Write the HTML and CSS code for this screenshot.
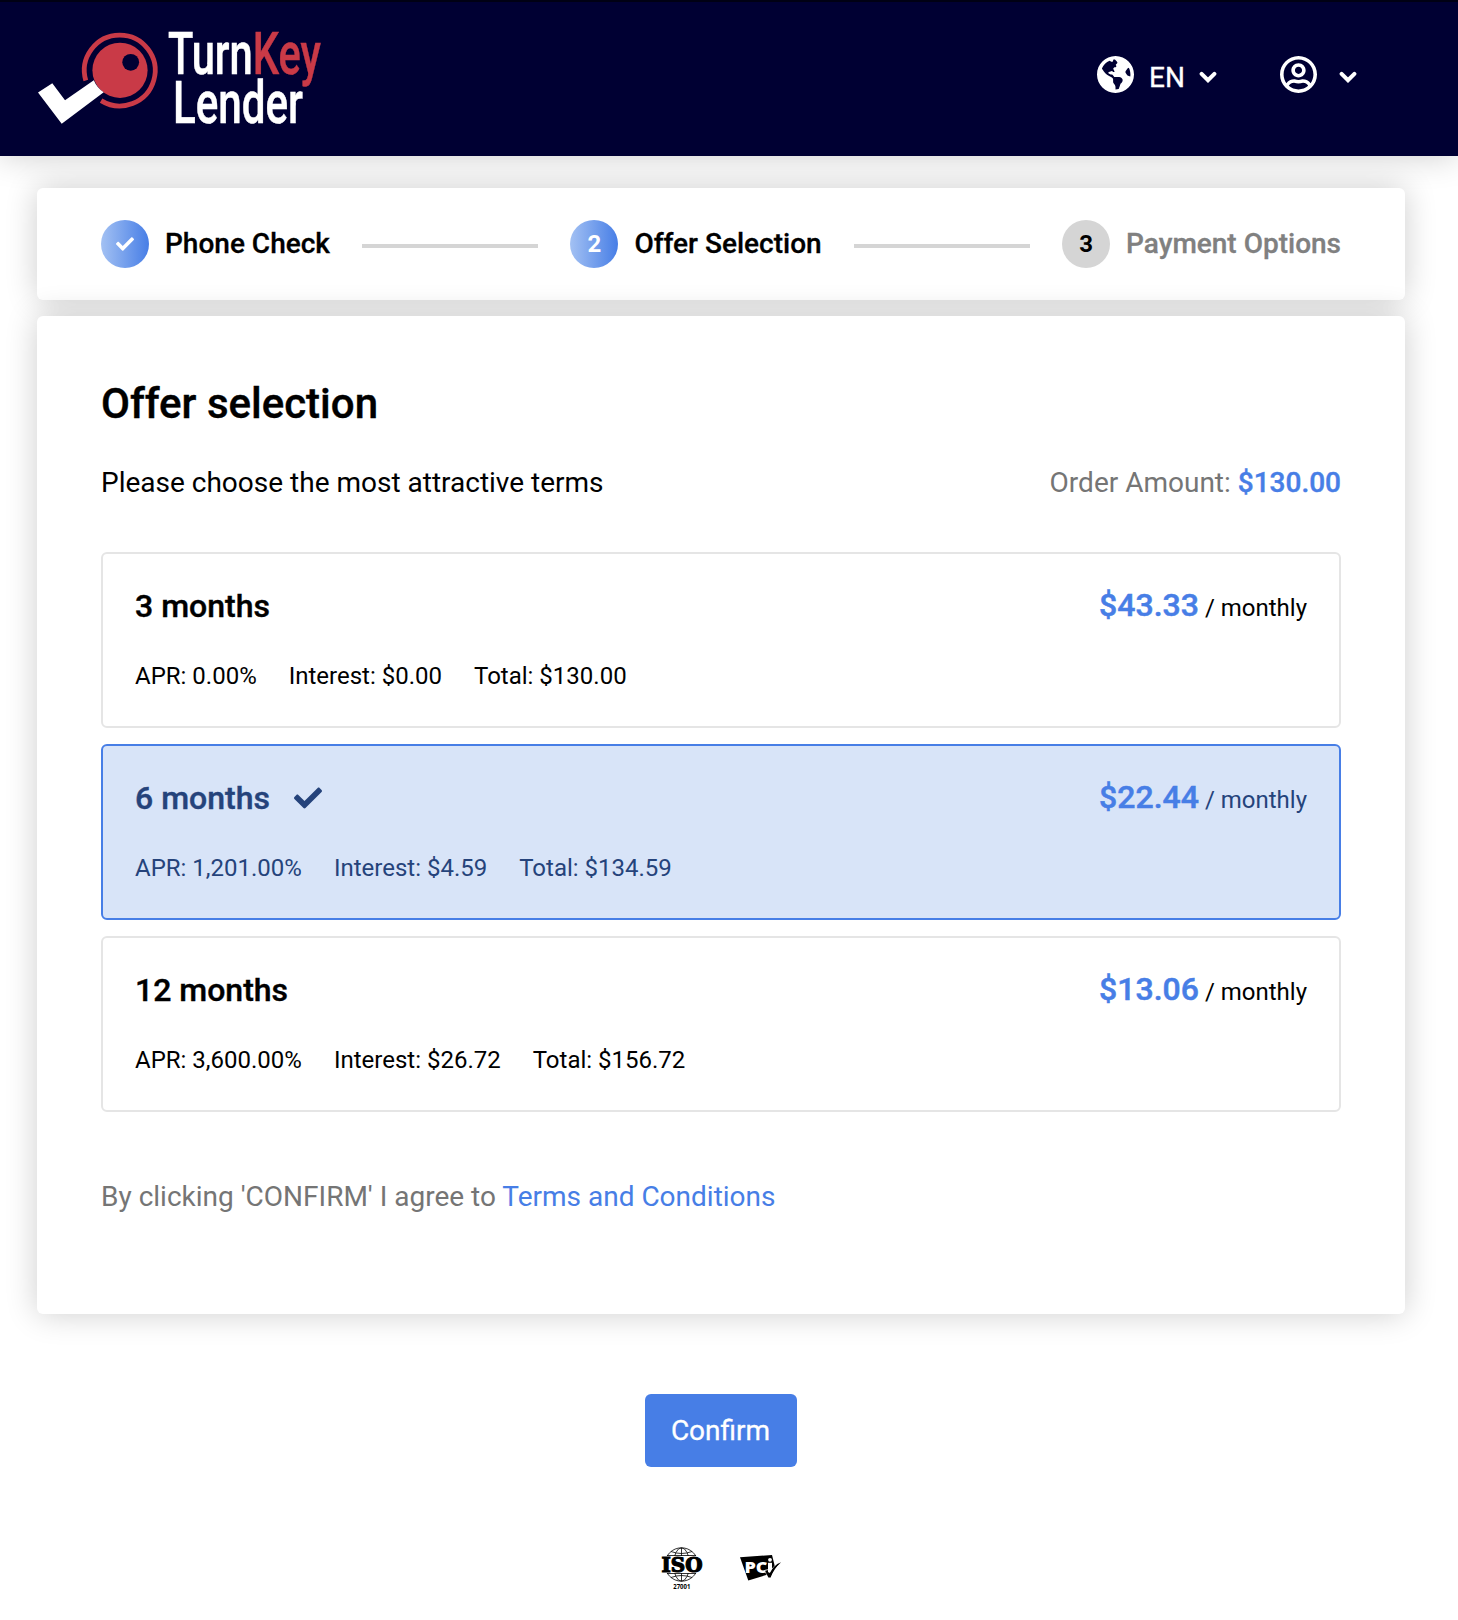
FILE: index.html
```html
<!DOCTYPE html>
<html lang="en">
<head>
<meta charset="utf-8">
<title>Offer selection</title>
<link rel="stylesheet" href="styles.css">
</head>
<body>
<svg class="defs" width="0" height="0" aria-hidden="true">
  <symbol id="check" viewBox="0 0 512 512"><path d="M173.898 439.404l-166.4-166.4c-9.997-9.997-9.997-26.206 0-36.204l36.203-36.204c9.997-9.998 26.207-9.998 36.204 0L192 312.69 432.095 72.596c9.997-9.997 26.207-9.997 36.204 0l36.203 36.204c9.997 9.997 9.997 26.206 0 36.204l-294.4 294.401c-9.998 9.997-26.207 9.997-36.204-.001z"/></symbol>
  <symbol id="chevron" viewBox="0 0 18 12"><path d="M2.6 2.8 L9 9.2 L15.4 2.8" fill="none" stroke="currentColor" stroke-width="4" stroke-linecap="round"/></symbol>
</svg>
<header class="header">
  <svg class="logo" width="290" height="100" viewBox="34 28 290 100" role="img" aria-label="TurnKey Lender">
    <path d="M85.8 80.5 A35.4 35.4 0 1 1 101.1 100.6" fill="none" stroke="#c93a47" stroke-width="4.800"/>
    <circle cx="120" cy="70.3" r="27.600" fill="#c93a47"/>
    <circle cx="130.700" cy="62.300" r="8.400" fill="#000033"/>
    <path d="M38 92.500 L52.300 83.300 L65 100.300 L93.800 80.300 Q97 88 103.700 92.300 L61.700 123.700 Z" fill="#fff"/>
    <g class="logo-text">
      <text x="168" y="74.300" textLength="153" lengthAdjust="spacingAndGlyphs">Turn<tspan class="logo-key">Key</tspan></text>
      <text x="173" y="123" textLength="130" lengthAdjust="spacingAndGlyphs">Lender</text>
    </g>
  </svg>
  <nav class="nav">
    <div class="nav-item language">
      <svg class="nav-icon" viewBox="0 8 496 496"><path d="M248 8C111.03 8 0 119.03 0 256s111.03 248 248 248 248-111.03 248-248S384.97 8 248 8zm82.29 357.6c-3.9 3.88-7.99 7.95-11.31 11.28-2.99 3-5.1 6.7-6.17 10.71-1.51 5.66-2.73 11.38-4.77 16.87l-17.39 46.85c-13.76 3-28 4.69-42.65 4.69v-27.38c1.69-12.62-7.64-36.26-22.63-51.25-6-6-9.37-14.14-9.37-22.63v-32.01c0-11.64-6.27-22.34-16.46-27.97-14.37-7.95-34.81-19.06-48.81-26.11-11.48-5.78-22.1-13.14-31.65-21.75l-.8-.72a114.792 114.792 0 0 1-18.06-20.74c-9.38-13.77-24.66-36.42-34.59-51.14 20.47-45.5 57.36-82.04 103.2-101.89l24.01 12.01C203.48 89.74 216 82.01 216 70.11v-11.3c7.99-1.29 16.12-2.11 24.39-2.42l28.3 28.3c6.25 6.25 6.25 16.38 0 22.63L264 112l-10.34 10.34c-3.12 3.12-3.12 8.19 0 11.31l4.69 4.69c3.12 3.12 3.12 8.19 0 11.31l-8 8a8.008 8.008 0 0 1-5.66 2.34h-8.99c-2.08 0-4.08.81-5.58 2.27l-9.92 9.65a8.008 8.008 0 0 0-1.58 9.31l15.59 31.19c2.66 5.32-1.21 11.58-7.15 11.58h-5.64c-1.93 0-3.79-.7-5.24-1.96l-9.28-8.06a16.017 16.017 0 0 0-15.55-3.1l-31.17 10.39a11.95 11.95 0 0 0-8.17 11.34c0 4.53 2.56 8.66 6.61 10.69l11.08 5.54c9.41 4.71 19.79 7.16 30.31 7.16s22.59 27.29 32 32h66.75c8.49 0 16.62 3.37 22.63 9.37l13.69 13.69a30.503 30.503 0 0 1 8.93 21.57 46.536 46.536 0 0 1-13.72 32.98zM417 274.25c-5.79-1.45-10.84-5-14.15-9.97l-17.98-26.97a23.97 23.97 0 0 1 0-26.62l19.59-29.38c2.32-3.47 5.5-6.29 9.24-8.15l12.98-6.49C440.2 193.59 448 223.87 448 256c0 8.67-.74 17.16-1.82 25.54L417 274.25z"/></svg>
      <span class="language-code">EN</span>
      <svg class="chevron"><use href="#chevron"/></svg>
    </div>
    <div class="nav-item account">
      <svg class="nav-icon" viewBox="0 8 496 496"><path d="M248 104c-53 0-96 43-96 96s43 96 96 96 96-43 96-96-43-96-96-96zm0 144c-26.500 0-48-21.500-48-48s21.500-48 48-48 48 21.500 48 48-21.500 48-48 48zm0-240C111 8 0 119 0 256s111 248 248 248 248-111 248-248S385 8 248 8zm0 448c-49.700 0-95.100-18.300-130.100-48.400 14.900-23 40.400-38.600 69.600-39.500 20.800 6.400 40.600 9.600 60.500 9.600s39.700-3.100 60.500-9.600c29.200 1 54.700 16.500 69.600 39.500-35 30.100-80.400 48.400-130.100 48.400zm162.700-84.100c-24.400-31.400-62.100-51.900-105.100-51.900-10.200 0-26 9.600-57.600 9.600-31.500 0-47.400-9.600-57.600-9.600-42.900 0-80.600 20.500-105.100 51.900C61.900 339.200 48 299.200 48 256c0-110.300 89.700-200 200-200s200 89.700 200 200c0 43.200-13.900 83.200-37.300 115.900z"/></svg>
      <svg class="chevron"><use href="#chevron"/></svg>
    </div>
  </nav>
</header>

<main class="main">
  <section class="card steps">
    <div class="step"><span class="badge badge-active"><svg class="badge-check"><use href="#check"/></svg></span>Phone Check</div>
    <span class="line"></span>
    <div class="step"><span class="badge badge-active">2</span>Offer Selection</div>
    <span class="line"></span>
    <div class="step step-next"><span class="badge">3</span>Payment Options</div>
  </section>

  <section class="card offers">
    <h1 class="title">Offer selection</h1>
    <div class="intro">
      <span>Please choose the most attractive terms</span>
      <span class="order">Order Amount: <b class="order-sum">$130.00</b></span>
    </div>
    <div class="offer-list">
      <article class="offer">
        <div class="offer-head"><h2 class="term">3 months</h2><div class="rate"><b class="sum">$43.33</b> / monthly</div></div>
        <div class="details"><span>APR: 0.00%</span><span>Interest: $0.00</span><span>Total: $130.00</span></div>
      </article>
      <article class="offer offer-selected">
        <div class="offer-head"><h2 class="term">6 months<svg class="term-check"><use href="#check"/></svg></h2><div class="rate"><b class="sum">$22.44</b> / monthly</div></div>
        <div class="details"><span>APR: 1,201.00%</span><span>Interest: $4.59</span><span>Total: $134.59</span></div>
      </article>
      <article class="offer">
        <div class="offer-head"><h2 class="term">12 months</h2><div class="rate"><b class="sum">$13.06</b> / monthly</div></div>
        <div class="details"><span>APR: 3,600.00%</span><span>Interest: $26.72</span><span>Total: $156.72</span></div>
      </article>
    </div>
    <p class="agree">By clicking 'CONFIRM' I agree to <a class="link">Terms and Conditions</a></p>
  </section>
  <button class="confirm">Confirm</button>
</main>

<footer class="footer">
  <svg width="42" height="44" viewBox="0 0 42 44" role="img" aria-label="ISO 27001">
    <g fill="none" stroke="#000" stroke-width=".8">
      <circle cx="20.500" cy="17.500" r="16.700"/>
      <ellipse cx="20.500" cy="17.500" rx="8" ry="16.700"/>
      <path d="M20.500 1v33M10 4.500Q20.500 8.500 31 4.500M10 30.500Q20.500 26.500 31 30.500M6 8.500h29M6 26.500h29"/>
    </g>
    <rect x="0" y="9" width="42" height="17" fill="#fff"/>
    <text class="iso" x=".5" y="25" textLength="41" lengthAdjust="spacingAndGlyphs">ISO</text>
    <text class="iso-number" x="12.300" y="42" textLength="17" lengthAdjust="spacingAndGlyphs">27001</text>
  </svg>
  <svg width="42" height="26" viewBox="0 0 42 26" role="img" aria-label="PCI">
    <path d="M0 2.300 L32 0 L35 12 L31 18.500 L8.300 25.500 Z"/>
    <text class="pci" x="4.500" y="18" textLength="23" lengthAdjust="spacingAndGlyphs">PC</text>
    <path d="M24.500 15.500 L28.500 14.500 L30 18 Q33 10 41 7.500 Q34 13 30.500 22.500 L28.500 22.500 Z" stroke="#fff" stroke-width=".8"/>
    <path d="M28 7.800h4v9.500h-4z" fill="#fff"/><circle cx="30" cy="4.800" r="1.900" fill="#fff"/>
    <path d="M25 16 L28.800 20 Q33.500 10 41 7.300 Q34 13.500 30.500 22.500 H28.500 Z"/>
  </svg>
</footer>
</body>
</html>
```
FILE: styles.css
```css
* { box-sizing: border-box; }

body {
  margin: 0;
  background: #fff;
  color: #000;
  font: 28px/32px Roboto, sans-serif;
}

.defs { display: block; }

.header {
  display: flex;
  justify-content: space-between;
  align-items: flex-start;
  height: 156px;
  padding: 26px 101px 0 34px;
  border-top: 2px solid #000014;
  background: #000033;
  box-shadow: 0 0 32px rgba(0, 0, 0, .2);
}

.logo { overflow: visible; }
.logo-text { fill: #fff; font-size: 58.5px; font-weight: 500; stroke: #fff; stroke-width: .5px; }
.logo-key { fill: #c93a47; stroke: #c93a47; }

.nav {
  display: flex;
  gap: 63px;
  padding-top: 28px;
  color: #fff;
}
.nav-item { display: flex; align-items: center; height: 37px; }
.nav-icon { width: 37px; height: 37px; fill: #fff; }
.language-code { margin: 6px 14px 0 15px; -webkit-text-stroke: .3px; }
.chevron { width: 18px; height: 12px; margin-top: 5px; }
.account { gap: 22px; }

.main {
  display: flex;
  flex-direction: column;
  padding: 32px 53px 0 37px;
}

.card {
  background: #fff;
  border-radius: 6px;
  box-shadow: 0 0 32px rgba(0, 0, 0, .2);
}

.steps {
  display: flex;
  align-items: center;
  gap: 32px;
  height: 112px;
  padding: 0 64px;
  font-weight: 500;
  -webkit-text-stroke: .3px;
}
.step { display: flex; align-items: center; gap: 16px; white-space: nowrap; }
.step-next { color: #808080; }
.badge {
  display: flex;
  align-items: center;
  justify-content: center;
  width: 48px;
  height: 48px;
  border-radius: 50%;
  background: #d5d5d5;
  color: #000;
  font-size: 24px;
  font-weight: 700;
  -webkit-text-stroke: 0;
}
.badge-active { background: linear-gradient(90deg, #a3c1f3, #477ee6); color: #fff; }
.badge-check { width: 18px; height: 18px; fill: #fff; }
.line { flex: 1; height: 4px; margin-top: 4px; background: #d5d5d5; }

.offers { height: 998px; margin-top: 16px; padding: 63px 64px 0; }
.title { margin: 0; font-size: 42px; line-height: 50px; font-weight: 500; -webkit-text-stroke: .4px; }
.intro { display: flex; justify-content: space-between; margin-top: 38px; }
.order { color: #757575; }
.order-sum { color: #477ee6; font-weight: 500; -webkit-text-stroke: .4px; }

.offer-list { display: flex; flex-direction: column; gap: 16px; margin-top: 53px; }
.offer {
  height: 176px;
  padding: 31px 32px;
  border: 2px solid #e5e5e5;
  border-radius: 6px;
}
.offer-selected { border-color: #477ee6; background: #d8e4f8; color: #25437b; }
.offer-head { display: flex; justify-content: space-between; align-items: flex-start; height: 40px; }
.term { display: flex; align-items: center; margin: 1px 0 0; font-size: 32px; line-height: 40px; font-weight: 500; -webkit-text-stroke: .4px; }
.term-check { width: 28px; height: 28px; margin-left: 24px; fill: #25437b; }
.rate { font-size: 24px; line-height: 40px; }
.sum { color: #477ee6; font-size: 32px; font-weight: 500; -webkit-text-stroke: .5px; }
.details { display: flex; gap: 32px; margin-top: 37px; font-size: 24px; line-height: 28px; }

.agree { margin: 69px 0 0; color: #757575; }
.link { color: #477ee6; }

.confirm {
  align-self: center;
  width: 152px;
  height: 73px;
  margin-top: 80px;
  padding: 0 1px 0 0;
  border: 0;
  border-radius: 6px;
  background: #477ee6;
  color: #fff;
  font: inherit;
  -webkit-text-stroke: .3px;
}

.footer { display: flex; justify-content: center; gap: 37px; padding: 80px 16px 0 0; }
.footer svg:last-child { margin-top: 8px; }
.iso { font: 700 20px "DejaVu Serif", serif; stroke: #000; stroke-width: 1.2px; }
.iso-number { font: 700 7px "Open Sans", sans-serif; }
.pci { fill: #fff; font: 800 15px "Open Sans", sans-serif; }
```
